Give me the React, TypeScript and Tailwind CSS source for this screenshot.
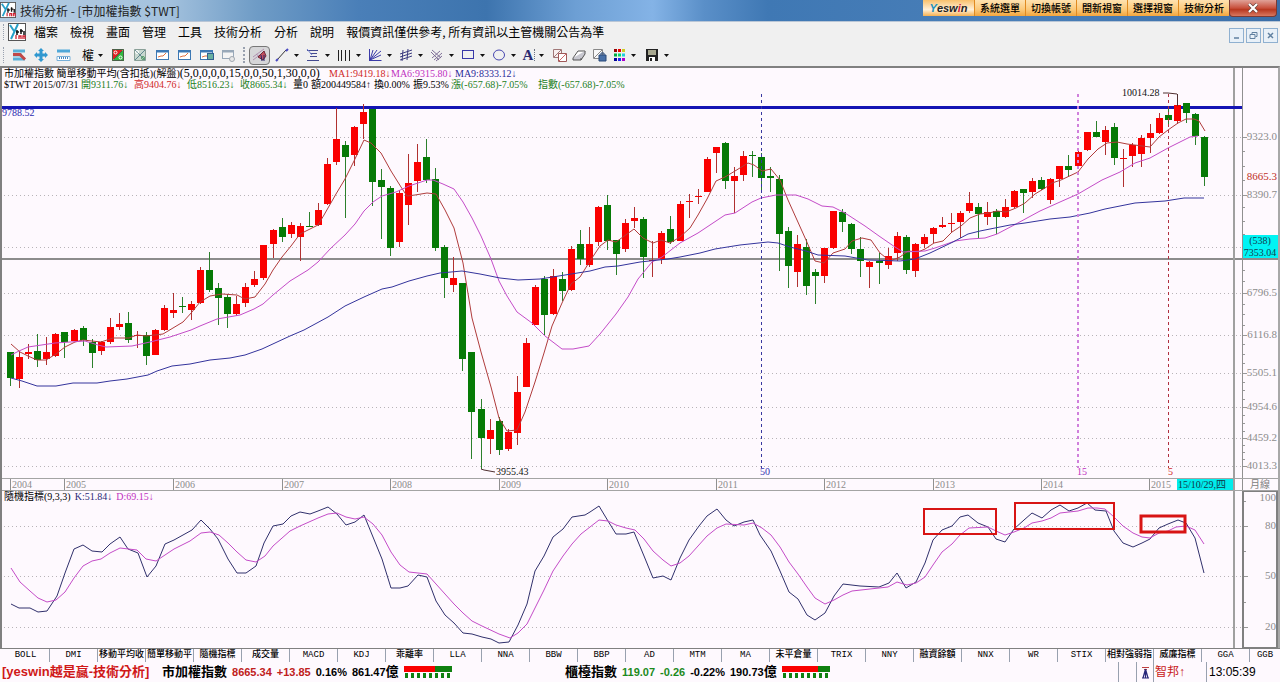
import { Fragment, type ReactNode } from "react";

const MONO = "font-['Liberation_Serif','Noto_Sans_CJK_TC',serif]";

// [bodyTop, bodyBottom, high, low, up]
type Candle = [number, number, number, number, 0 | 1];

const CANDLES: Candle[] = [
  // 2004
  [352, 378, 352, 386, 0], [357, 379, 352, 388, 1], [352, 354, 344, 359, 1], [351, 360, 334, 367, 0],
  [352, 359, 337, 365, 1], [334, 356, 333, 357, 1],
  // 2005
  [332, 342, 332, 358, 0], [330, 341, 329, 341, 1], [328, 340, 326, 346, 0], [342, 353, 339, 368, 0],
  [342, 351, 341, 355, 1], [327, 342, 318, 344, 1], [324, 327, 313, 330, 1], [323, 340, 312, 343, 0],
  [335, 336, 331, 348, 1], [335, 356, 332, 365, 0], [330, 355, 329, 355, 1], [308, 330, 305, 331, 1],
  // 2006
  [310, 313, 293, 318, 1], [306, 307, 297, 313, 0], [304, 310, 301, 320, 1], [270, 303, 267, 304, 1],
  [270, 290, 252, 292, 0], [288, 298, 283, 325, 0], [297, 314, 294, 328, 0], [304, 314, 296, 316, 1],
  [287, 303, 283, 307, 1], [279, 285, 271, 287, 1], [245, 278, 245, 280, 1], [230, 244, 229, 258, 1],
  // 2007
  [227, 237, 218, 242, 0], [225, 234, 222, 238, 1], [226, 237, 223, 261, 1], [226, 227, 212, 227, 0],
  [210, 225, 203, 226, 1], [164, 204, 158, 205, 1], [139, 162, 108, 165, 1], [145, 157, 141, 218, 0],
  [127, 155, 126, 166, 1], [112, 124, 104, 139, 1], [109, 182, 109, 206, 0], [180, 187, 169, 239, 0],
  // 2008
  [188, 248, 186, 256, 0], [193, 242, 190, 247, 1], [183, 205, 154, 225, 1], [162, 181, 144, 192, 1],
  [157, 180, 139, 183, 0], [179, 248, 168, 251, 0], [247, 278, 245, 298, 0], [278, 285, 257, 292, 1],
  [283, 359, 283, 371, 0], [352, 412, 352, 459, 0], [409, 438, 399, 469, 0], [430, 439, 419, 454, 1],
  // 2009
  [421, 450, 417, 455, 0], [432, 449, 429, 451, 1], [392, 433, 376, 445, 1], [343, 387, 338, 387, 1],
  [287, 325, 285, 325, 1], [279, 315, 276, 336, 0], [276, 314, 269, 315, 1], [279, 291, 272, 301, 0],
  [249, 290, 246, 291, 1], [244, 259, 230, 265, 0], [244, 265, 227, 267, 1], [207, 242, 206, 246, 1],
  // 2010
  [205, 241, 195, 250, 0], [240, 254, 240, 275, 0], [223, 249, 219, 252, 1], [218, 221, 207, 228, 1],
  [219, 257, 217, 278, 0], [260, 261, 241, 277, 1], [233, 259, 231, 264, 1], [229, 242, 216, 244, 0],
  [204, 241, 201, 241, 1], [201, 202, 194, 218, 1], [196, 197, 189, 204, 1], [159, 192, 157, 192, 1],
  // 2011
  [147, 153, 147, 173, 1], [143, 181, 142, 189, 0], [176, 181, 167, 213, 1], [156, 175, 151, 181, 1],
  [155, 156, 151, 177, 0], [157, 178, 153, 192, 0], [176, 178, 167, 192, 0], [179, 234, 175, 271, 0],
  [231, 266, 227, 288, 0], [244, 272, 235, 287, 1], [247, 286, 239, 295, 0], [272, 276, 269, 304, 0],
  // 2012
  [248, 276, 248, 283, 1], [211, 248, 211, 249, 1], [212, 222, 209, 232, 0], [224, 249, 223, 254, 0],
  [249, 261, 237, 277, 0], [262, 267, 261, 288, 1], [261, 263, 253, 284, 0], [256, 265, 248, 269, 1],
  [236, 253, 232, 261, 1], [237, 270, 235, 274, 0], [244, 271, 243, 277, 1], [237, 244, 234, 248, 1],
  // 2013
  [228, 234, 227, 243, 1], [225, 227, 217, 228, 1], [223, 224, 213, 232, 1], [213, 222, 211, 238, 1],
  [203, 211, 192, 213, 1], [207, 214, 203, 238, 0], [212, 217, 202, 225, 1], [211, 217, 209, 234, 0],
  [207, 217, 199, 218, 1], [191, 207, 190, 208, 1], [189, 193, 189, 213, 0], [181, 192, 178, 198, 1],
  // 2014
  [180, 189, 177, 190, 0], [179, 200, 178, 204, 1], [166, 179, 166, 187, 1], [166, 170, 155, 177, 0],
  [152, 166, 148, 166, 1], [132, 150, 132, 151, 1], [132, 137, 121, 137, 0], [130, 142, 126, 155, 1],
  [127, 158, 123, 165, 0], [158, 159, 149, 187, 1], [145, 156, 143, 167, 1], [138, 154, 135, 167, 1],
  // 2015
  [133, 138, 124, 153, 1], [118, 133, 113, 134, 1], [115, 120, 108, 127, 0], [105, 121, 94, 124, 1],
  [103, 113, 103, 123, 0], [114, 136, 113, 145, 0], [137, 177, 136, 186, 0],
];

const MA5 =
  "11,344 20,352 28,356 37,360 46,360 56,354 65,347 75,342 83,340 101,342 113,338 129,338 137,335 146,336 163,334 183,322 192,312 200,302 210,296 222,294 237,295 245,299 255,297 265,284 273,270 282,257 291,246 300,234 318,225 324,215 336,194 345,179 354,161 364,140 371,143 381,153 391,171 401,187 407,196 415,195 427,193 436,194 445,210 454,228 463,263 472,318 481,352 491,387 499,418 507,431 517,430 525,412 535,382 544,353 552,326 562,303 571,284 580,277 590,261 600,246 608,240 616,242 634,229 643,238 653,243 661,240 670,243 680,237 690,228 698,215 707,199 716,181 725,177 735,171 748,163 754,165 762,171 771,169 780,180 788,200 797,220 806,240 815,261 824,263 833,253 845,249 852,241 862,238 871,240 880,253 890,261 900,257 908,251 918,252 925,249 934,243 943,241 952,232 961,226 970,218 980,214 989,213 997,211 1006,212 1016,208 1025,203 1035,194 1045,188 1052,183 1061,180 1078,172 1088,159 1098,149 1107,143 1117,142 1127,144 1150,147 1159,137 1168,130 1178,123 1186,119 1194,119 1199,121 1205,131";
const MA15 =
  "11,355 19,351 28,347 55,343 85,341 98,345 106,347 132,346 150,342 170,337 191,330 200,326 217,319 240,315 254,309 263,304 273,295 290,281 308,270 318,262 331,248 345,235 355,224 364,211 373,202 382,196 396,192 409,186 427,180 433,180 443,184 454,189 463,202 472,218 481,236 491,259 499,281 507,296 517,312 532,323 545,336 562,349 573,349 589,346 600,334 616,314 628,297 638,279 652,262 662,257 680,243 698,233 716,221 725,215 735,213 752,202 761,198 776,195 796,195 808,199 822,206 833,207 845,213 865,226 879,236 895,247 903,252 925,251 935,248 955,241 970,239 985,238 997,234 1016,224 1040,211 1060,202 1078,194 1102,180 1120,172 1135,163 1150,158 1168,148 1180,142 1190,137 1198,136";
const MA50 =
  "11,378 22,381 37,386 56,386 73,383 97,383 110,381 127,379 148,375 157,371 172,366 190,364 210,360 230,358 245,355 262,349 290,336 304,330 328,317 345,306 364,297 382,289 392,287 409,281 427,276 440,273 462,271 480,274 500,278 518,280 540,279 565,275 590,271 605,267 618,266 640,262 668,259 680,257 700,253 715,249 740,245 768,242 778,243 790,247 806,251 818,255 845,256 868,260 900,261 915,259 930,253 953,242 968,234 980,231 1010,225 1025,223 1050,219 1070,217 1090,213 1105,209 1120,206 1135,203 1165,201 1184,198 1204,198";
const K_LINE =
  "11,604 19,608 30,608 38,612 47,611 57,596 65,573 74,549 83,545 92,551 102,552 110,544 120,537 128,549 138,553 147,577 156,566 165,544 174,540 192,530 201,520 210,529 218,539 228,559 237,573 246,573 256,566 264,543 273,526 283,524 291,516 300,512 310,514 318,511 328,507 337,514 346,525 355,522 364,515 373,537 382,559 391,588 400,588 408,586 418,575 427,577 436,601 445,615 454,623 463,633 472,634 482,637 491,639 499,643 509,642 518,625 527,604 535,571 544,556 553,537 563,529 572,517 585,515 590,512 599,506 608,521 616,534 626,534 634,532 644,556 653,578 663,576 671,580 680,558 689,540 699,526 707,516 717,509 726,520 734,526 744,522 753,520 760,535 771,551 780,571 789,592 798,599 807,615 815,620 825,613 834,596 843,584 860,586 879,587 889,583 897,573 906,588 916,582 925,563 933,540 942,530 952,526 960,517 968,515 978,523 988,527 996,539 1005,542 1014,529 1024,520 1032,513 1042,518 1051,510 1060,505 1069,511 1078,508 1087,503 1095,510 1106,511 1114,531 1123,543 1133,547 1142,543 1150,539 1159,528 1168,524 1178,520 1186,523 1195,538 1204,573";
const D_LINE =
  "11,568 20,582 30,591 38,598 47,602 56,600 65,592 74,578 83,566 92,561 101,559 110,553 120,548 137,550 146,559 156,561 165,555 174,549 190,541 201,533 210,532 219,535 228,543 237,552 246,560 256,562 265,556 273,546 290,531 300,526 318,518 328,514 337,513 346,517 355,519 364,517 373,524 382,535 391,552 400,565 409,572 427,574 436,584 445,594 454,604 463,613 472,621 482,626 499,634 510,638 518,633 527,624 535,608 544,590 553,571 563,556 572,544 581,534 599,520 608,521 616,525 626,528 635,530 644,539 653,551 663,560 671,566 680,563 689,556 698,546 707,536 717,528 726,524 744,525 753,523 762,528 771,535 780,547 789,562 798,574 807,587 815,598 825,604 834,600 843,595 852,591 861,590 888,587 897,582 907,585 916,583 925,577 933,565 942,552 952,544 960,535 969,528 988,527 996,531 1005,535 1014,532 1024,528 1032,523 1042,521 1051,518 1060,513 1078,511 1088,508 1097,508 1105,509 1114,517 1123,526 1133,533 1142,537 1150,538 1159,533 1168,531 1176,527 1186,526 1195,530 1204,544";

const PRICE_GRID: [number, string][] = [
  [137, "9323.0"], [195, "8390.7"], [247, ""], [293, "6796.5"], [335, "6116.8"],
  [373, "5505.1"], [407, "4954.6"], [438, "4459.2"], [466, "4013.3"],
];
const PRICE_MINOR = [151, 166, 180, 207, 221, 234, 270, 281, 304, 314, 325, 344, 354, 363, 382, 390, 399, 415, 423, 431, 445, 452, 459];
const YEARS: [number, number][] = [
  [10, 2004], [64, 2005], [173, 2006], [282, 2007], [390, 2008], [499, 2009],
  [607, 2010], [716, 2011], [824, 2012], [933, 2013], [1041, 2014], [1149, 2015],
];

const MENUS = ["檔案", "檢視", "畫面", "管理", "工具", "技術分析", "分析", "說明"];
const QUICK = ["系統選單", "切換帳號", "開新視窗", "選擇視窗", "技術分析"];
const TABS = [
  "BOLL", "DMI", "移動平均收", "簡單移動平", "隨機指標", "成交量", "MACD", "KDJ", "乖離率",
  "LLA", "NNA", "BBW", "BBP", "AD", "MTM", "MA", "未平倉量", "TRIX", "NNY",
  "融資餘額", "NNX", "WR", "STIX", "相對強弱指", "威廉指標", "GGA", "GGB",
];

function AppLogo({ className }: { className: string }) {
  return (
    <svg viewBox="0 0 18 18" className={className} aria-hidden="true">
      <rect x=".5" y=".5" width="17" height="17" fill="#fff" stroke="#555" />
      <path d="M2 2l4 6M10 1L3 16" stroke="#28a0c8" strokeWidth="2" fill="none" />
      <path d="M9 7v5M8 9h3M13 6v5M12 8h3M16 8v4" stroke="#111" strokeWidth="1.5" />
      <path d="M8 16v-4M11 16v-3h2v3M15 16v-3h2v3" stroke="#d02030" strokeWidth="1.3" fill="none" />
    </svg>
  );
}

function Icon({ children }: { children: ReactNode }) {
  return (
    <svg viewBox="0 0 16 16" className="h-4 w-4 shrink-0" fill="none" stroke="#3a3a9a" aria-hidden="true">
      {children}
    </svg>
  );
}

function Caret() {
  return (
    <svg viewBox="0 0 5 3" className="h-[3px] w-[5px] shrink-0" aria-hidden="true">
      <path d="M0 0h5L2.5 3z" fill="#111" />
    </svg>
  );
}

function ToolButton({ label, children }: { label: string; children: ReactNode }) {
  return (
    <button aria-label={label} className="flex h-5 w-[22px] shrink-0 items-center justify-center">
      {children}
    </button>
  );
}

function DropButton({ label, children }: { label: string; children: ReactNode }) {
  return (
    <button aria-label={label} className="flex h-5 w-[31px] shrink-0 items-center gap-1 pl-0.5">
      {children}
      <Caret />
    </button>
  );
}

function MiniChart({ extra }: { extra?: ReactNode }) {
  return (
    <Icon>
      <rect x="2.5" y="3.5" width="12" height="9" fill="#fff" stroke="#3c78b4" />
      <path d="M2 4.5h13" stroke="#3c78b4" strokeWidth="2" />
      <path d="M4 10l3-1 2 0 3-3" stroke="#e07040" />
      {extra}
    </Icon>
  );
}

function TitleBar() {
  return (
    <header className="flex h-[22px] items-start border-b border-[#b9c6d6] bg-[linear-gradient(90deg,#b4cbe0_0%,#a4c2de_13%,#6f9cc6_20%,#4a7fb8_28%,#3d74ae_38%,#6d9fd4_45%,#84b3e6_51%,#5a8fc8_55%,#3f78b4_60%,#4a7fb8_80%,#3a6ea8_100%)]">
      <AppLogo className="mt-0.5 h-4 w-4 shrink-0" />
      <h1 className="ml-1 text-[12px] leading-[21px] text-[#222]">技術分析 - [市加權指數 $TWT]</h1>
      <nav className="ml-auto flex h-4 bg-[#f3a53c]">
        <button className="flex w-[51px] items-center justify-center bg-[linear-gradient(#f8c06c,#fff0d8_60%,#f5b050)] font-['Liberation_Sans',sans-serif] text-[11px] leading-4 font-bold italic">
          <span className="text-[#2090c0]">Y</span>
          <span className="text-[#222]">esw</span>
          <span className="text-[#d02040]">i</span>
          <span className="text-[#222]">n</span>
        </button>
        {QUICK.map((label) => (
          <button
            key={label}
            className="w-[51px] border-l border-[#e08a20] bg-[linear-gradient(#ffe2b0,#fbc878_60%,#f3a53c)] text-[10px] leading-4 font-medium whitespace-nowrap text-black"
          >
            {label}
          </button>
        ))}
      </nav>
      <button
        aria-label="關閉"
        className="mr-[3px] flex h-[17px] w-12 items-center justify-center rounded-b-sm border border-t-0 border-[#7a3a34] bg-[linear-gradient(#e0a298,#c8503c_50%,#b83820_60%,#d87860)]"
      >
        <svg viewBox="0 0 12 10" className="h-2.5 w-3">
          <path d="M2 1l8 8M10 1L2 9" stroke="#64403c" strokeWidth="3.4" />
          <path d="M2 1l8 8M10 1L2 9" stroke="#fff" strokeWidth="2.2" />
        </svg>
      </button>
    </header>
  );
}

function MenuBar() {
  const box = "flex h-[15px] w-[15px] items-center justify-center border border-[#8fb0d0] bg-[#e8f0f8]";
  return (
    <div className="flex h-5 items-center pl-[3px]">
      <span className="h-4 border-l border-dotted border-gray-400" />
      <AppLogo className="ml-1 h-[18px] w-[18px] shrink-0" />
      <nav className="ml-2 flex gap-3 text-[12px] leading-5 whitespace-nowrap text-black">
        {MENUS.map((m) => (
          <button key={m}>{m}</button>
        ))}
        <span>報價資訊僅供參考, 所有資訊以主管機關公告為準</span>
      </nav>
      <div className="mt-1.5 mr-0.5 ml-auto flex gap-0.5">
        <button aria-label="最小化" className={box}>
          <svg viewBox="0 0 9 9" className="h-[9px] w-[9px]"><path d="M2 7h5" stroke="#6080a0" strokeWidth="1.5" /></svg>
        </button>
        <button aria-label="還原" className={box}>
          <svg viewBox="0 0 9 9" className="h-[9px] w-[9px]" fill="none" stroke="#6080a0">
            <path d="M3 3V1.500h5v4H6.500M1 3.500h5v4H1z" />
          </svg>
        </button>
        <button aria-label="關閉子視窗" className={box}>
          <svg viewBox="0 0 9 9" className="h-[9px] w-[9px]"><path d="M2 2l5 5M7 2L2 7" stroke="#6080a0" strokeWidth="1.5" /></svg>
        </button>
      </div>
    </div>
  );
}

function Toolbar() {
  return (
    <div className="flex h-6 items-center pt-0.5 pl-[3px]">
      <span className="mr-1 h-4 border-l border-dotted border-gray-400" />
      <ToolButton label="商品">
        <Icon>
          <path d="M2 4h12M2 8h9" stroke="#58b0d8" strokeWidth="3" />
          <path d="M2 12h12" stroke="#58b0d8" strokeWidth="3" />
          <path d="M2 7.500h7l5 5" stroke="#c04848" strokeWidth="3" />
        </Icon>
      </ToolButton>
      <ToolButton label="移動">
        <Icon>
          <path d="M8 3v10M3 8h10" stroke="#3098d0" strokeWidth="3" />
          <path d="M8 1l3 3H5zM8 15l3-3H5zM1 8l3-3v6zM15 8l-3-3v6z" fill="#3098d0" stroke="none" />
        </Icon>
      </ToolButton>
      <ToolButton label="尺標">
        <Icon>
          <path d="M2 4h13" stroke="#50a8d8" strokeWidth="3" />
          <path d="M2 9.500h13v4H2z" fill="#fff" stroke="#78b0d8" />
          <path d="M4.500 10v2M6.500 10v2M8.500 10v2M10.500 10v2M12.500 10v2" stroke="#4888c0" />
        </Icon>
      </ToolButton>
      <button className="flex h-5 w-[33px] shrink-0 items-center gap-1 pl-2 text-[12px] text-black">
        權
        <Caret />
      </button>
      <ToolButton label="百分比">
        <Icon>
          <path d="M2 2h12L2 14z" fill="#e02020" stroke="none" />
          <path d="M14 2v12H2z" fill="#30b840" stroke="none" />
          <path d="M2.500 2.500h11v11h-11zM4 12l8-8" stroke="#486048" />
          <circle cx="5.500" cy="5.500" r="1.500" stroke="#fff" />
          <circle cx="10.500" cy="10.500" r="1.500" stroke="#fff" />
        </Icon>
      </ToolButton>
      <ToolButton label="還原百分比">
        <Icon>
          <path d="M2.500 2.500h11v11h-11z" fill="#c8d8d0" stroke="#8aa098" />
          <path d="M3 13L13 3M3 3l10 10" stroke="#608890" />
          <circle cx="5" cy="5" r="1.500" stroke="#fff" />
          <circle cx="11" cy="11" r="1.500" stroke="#50a060" />
        </Icon>
      </ToolButton>
      <ToolButton label="走勢一"><MiniChart /></ToolButton>
      <ToolButton label="走勢二"><MiniChart /></ToolButton>
      <ToolButton label="走勢三">
        <MiniChart extra={<rect x="9.500" y="6.500" width="6" height="6" fill="#68b0a0" stroke="#306090" />} />
      </ToolButton>
      <ToolButton label="設定">
        <Icon>
          <rect x="2.500" y="3.500" width="11" height="8" fill="#f4f4f4" stroke="#98a8b8" />
          <path d="M2 4.500h12" stroke="#98a8b8" strokeWidth="2" />
          <circle cx="12" cy="12" r="2.500" fill="#e8e8e8" stroke="#a0a8b0" />
        </Icon>
      </ToolButton>
      <span className="mx-1 h-4 border-l-2 border-dotted border-gray-400" />
      <button aria-label="畫線" className="mr-0.5 flex h-[19px] w-[21px] shrink-0 items-center justify-center rounded-sm border border-[#777] bg-[#d6d6d8]">
        <Icon>
          <path d="M1 10L12 2M1 13L13 4M4 7l8 6" stroke="#b090b0" />
          <path d="M6 10l6-6 2 5-3 4z" fill="#c05060" stroke="#702838" />
          <path d="M9 8l1 6M12 8v6" stroke="#28286a" />
        </Icon>
      </button>
      <DropButton label="趨勢線"><Icon><path d="M3 13L12 3" stroke="#333" /><path d="M2 14l2-2M12 4l2-2" stroke="#4848c0" strokeWidth="2" /></Icon></DropButton>
      <DropButton label="黃金分割"><Icon><path d="M2 3.500h11M5 6.500h7M5 9.500h7M2 13.500h12" stroke="#444a90" /><path d="M2 2l5 6" stroke="#7080d0" /></Icon></DropButton>
      <DropButton label="週期線"><Icon><path d="M2.500 3v11M5.500 3v11M9.500 3v11M13.500 3v11" stroke="#222" /></Icon></DropButton>
      <DropButton label="扇形線"><Icon><path d="M2.500 2v12M2.500 13.500h12M3 13L6 3M3 13L10 3M3 13l11-9M3 13l11-5" stroke="#3a3aa8" /></Icon></DropButton>
      <DropButton label="通道線"><Icon><path d="M2 7l12-4M2 10l12-4M2 13l12-4M5 3L4 14M10 2L9 13" stroke="#3c3c80" /></Icon></DropButton>
      <DropButton label="平行線"><Icon><path d="M3 11l8-7M5 13l8-7M7 14l6-5M2 5l8 8M3 3l9 8" stroke="#807098" /></Icon></DropButton>
      <DropButton label="矩形"><Icon><rect x="2.500" y="3.500" width="11" height="8" stroke="#3838a8" /></Icon></DropButton>
      <DropButton label="橢圓"><Icon><ellipse cx="8" cy="8" rx="5.500" ry="5" stroke="#4848b0" /></Icon></DropButton>
      <button aria-label="文字" className="flex h-5 w-[31px] shrink-0 items-center pl-0.5">
        <span className="w-3 font-['Liberation_Serif',serif] text-[15px] leading-none font-bold text-[#2a2a70]">A</span>
        <span className="mr-1 h-3 border-r border-dotted border-gray-500" />
        <Caret />
      </button>
      <div className="flex shrink-0 gap-1 pr-1">
        <button aria-label="複製">
          <Icon><path d="M2.500 2.500h8v8h-8zM3 10l7-7" fill="#f8f0f0" stroke="#a07878" /><path d="M7.500 6.500h8v8h-8z" fill="#fff" stroke="#a05858" /><path d="M8 14l7-7" stroke="#d06868" /></Icon>
        </button>
        <button aria-label="橡皮擦">
          <Icon><path d="M2 11l5-7h7l-4 7z" fill="#fff" stroke="#555" /><path d="M2 11v2h8l4-6V4M10 11v2" fill="#c8c8d0" stroke="#555" /></Icon>
        </button>
        <button aria-label="鎖定">
          <Icon><path d="M2.500 2.500h9v9h-9zM3 11l8-8" fill="#f8f8f8" stroke="#888" /><path d="M8 8h7v6H8z" fill="#4870a8" stroke="#284878" /><path d="M10 8V6h3v2" stroke="#284878" /></Icon>
        </button>
      </div>
      <DropButton label="顏色">
        <svg viewBox="0 0 14 14" className="h-3.5 w-3.5 shrink-0" aria-hidden="true" strokeWidth="3" strokeDasharray="3 1">
          <path d="M1 2.500h4" stroke="#900" /><path d="M5 2.500h4" stroke="#e00" /><path d="M9 2.500h4" stroke="#cc2" />
          <path d="M1 7h4" stroke="#0a4" /><path d="M5 7h4" stroke="#0d6" /><path d="M9 7h4" stroke="#2cd" />
          <path d="M1 11.500h4" stroke="#009" /><path d="M5 11.500h4" stroke="#22e" /><path d="M9 11.500h4" stroke="#a0c" />
        </svg>
      </DropButton>
      <DropButton label="儲存">
        <Icon><path d="M2 2h12v12H2z" fill="#222" stroke="none" /><path d="M4 3h8v5H4z" fill="#a8a890" stroke="none" /><path d="M5 10h6v4H5z" fill="#fff" stroke="none" /><path d="M6 11h2v3H6z" fill="#222" stroke="none" /></Icon>
      </DropButton>
    </div>
  );
}

function ChartInfo() {
  const green = "text-[#228022]";
  return (
    <div className={`flex h-[22px] ${MONO} text-[10px] leading-[11px] whitespace-nowrap text-black`}>
      <div className="flex-1 pl-0.5">
        <div className="flex">
          <span className="w-[325px]">
            市加權指數 簡單移動平均(含扣抵)(解盤)<span className="text-[12px]">(5,0,0,0,0,15,0,0,50,1,30,0,0)</span>
          </span>
          <span className="w-[62px] text-[#d02828]">MA1:9419.18↓</span>
          <span className="w-16 text-[#c030c0]">MA6:9315.80↓</span>
          <span className="text-[#2a2a98]">MA9:8333.12↓</span>
        </div>
        <div className="flex">
          <span className="w-[77px]">$TWT 2015/07/31</span>
          <span className={`w-[53px] ${green}`}>開9311.76↓</span>
          <span className="w-[53px] text-[#d02828]">高9404.76↓</span>
          <span className={`w-[53px] ${green}`}>低8516.23↓</span>
          <span className={`w-[53px] ${green}`}>收8665.34↓</span>
          <span className="w-[18px]">量0</span>
          <span className="w-[63px]">額200449584↑</span>
          <span className="w-[39px]">換0.00%</span>
          <span className="w-[38px]">振9.53%</span>
          <span className={`w-[87px] ${green}`}>漲(-657.68)-7.05%</span>
          <span className={green}>指數(-657.68)-7.05%</span>
        </div>
      </div>
      <div className="w-2.5 border-r border-l-2 border-r-[#909090] border-l-[#a0a0a0]" />
      <div className="w-[35px]" />
    </div>
  );
}

function PriceChart() {
  return (
    <svg viewBox="2 90 1276 401" className={`block h-auto w-full overflow-visible ${MONO} text-[10px]`} role="img" aria-label="市加權指數月線">
      <g stroke="#b8b4b8" strokeDasharray="1 3" shapeRendering="crispEdges">
        {PRICE_GRID.map(([y]) => (
          <path key={y} d={`M4 ${y}.5H1243`} />
        ))}
      </g>
      <g shapeRendering="crispEdges">
        <path d="M2 259H1278" stroke="#8c8c8c" strokeWidth="2" />
        <path d="M1234 90V491" stroke="#a0a0a0" strokeWidth="2" />
        <path d="M1242.500 90V491" stroke="#909090" />
        <path d="M2 107.500H1242" stroke="#1414b4" strokeWidth="3" />
        {CANDLES.map(([top, bottom, high, low, up], i) => {
          const x = Math.floor(10.7 + 9.045 * i);
          return (
            <g key={i} fill={up ? "#fa0000" : "#067a06"}>
              <rect x={x} y={high} width="1" height={low - high} fill={up ? "#b03030" : "#2c802c"} />
              <rect x={x - 3} y={top} width="7" height={bottom - top} />
            </g>
          );
        })}
      </g>
      <g fill="none">
        <polyline points={MA5} stroke="#b03c3c" />
        <polyline points={MA15} stroke="#c44cc8" />
        <polyline points={MA50} stroke="#34349c" />
      </g>
      <g strokeDasharray="3 3" shapeRendering="crispEdges">
        <path d="M761.500 94V468" stroke="#3838a0" />
        <path d="M1078 94V468" stroke="#d080dc" strokeWidth="2" />
        <path d="M1168.500 94V468" stroke="#b03040" />
      </g>
      <path d="M1163 93h5l9 1M1177.500 94v12M481 469l3 1 11 2" stroke="#503030" fill="none" />
      <text x="1122" y="96" fill="#111">10014.28</text>
      <text x="496" y="475" fill="#111">3955.43</text>
      <text x="2" y="116" fill="#2a2ab0">9788.52</text>
      <text x="760" y="475" fill="#3434b0">50</text>
      <text x="1077" y="475" fill="#c030c0">15</text>
      <text x="1168" y="475" fill="#d02828">5</text>

      {/* price scale */}
      <g stroke="#989898" shapeRendering="crispEdges">
        {PRICE_GRID.map(([y]) => (
          <path key={y} d={`M1243 ${y}.5h4`} />
        ))}
        {PRICE_MINOR.map((y) => (
          <path key={y} d={`M1243 ${y}.5h2`} />
        ))}
      </g>
      <g textAnchor="end" fill="#8c8c8c" className="text-[11px]">
        {PRICE_GRID.map(([y, label]) => (
          <text key={y} x="1277" y={y + 3}>{label}</text>
        ))}
        <text x="1277" y="180" fill="#c03028">8665.3</text>
      </g>
      <rect x="1243" y="235" width="35" height="23" fill="#00f4f4" />
      <g textAnchor="middle" fill="#124050" className="text-[10px]">
        <text x="1260" y="244">(538)</text>
        <text x="1260" y="256">7353.04</text>
      </g>

      {/* time scale */}
      <path d="M2 478.500H1278M2 490.500H1278" stroke="#a4a4a4" shapeRendering="crispEdges" />
      {YEARS.map(([x, year]) => (
        <Fragment key={year}>
          <path d={`M${x}.5 479v11`} stroke="#909090" shapeRendering="crispEdges" />
          <text x={x + 2} y="488" fill="#8c8c8c">{year}</text>
        </Fragment>
      ))}
      <rect x="1177" y="479" width="56" height="11" fill="#00ecec" />
      <text x="1178" y="488" fill="#103848">15/10/29,四</text>
      <text x="1260" y="488" textAnchor="middle" fill="#808080">月線</text>
    </svg>
  );
}

function StochasticChart() {
  return (
    <div className="relative">
      <div className={`absolute top-0 left-0.5 flex gap-1 ${MONO} text-[10px] leading-[11px] text-black`}>
        <span>隨機指標(9,3,3)</span>
        <span className="text-[#2a2a78]">K:51.84↓</span>
        <span className="text-[#c030c0]">D:69.15↓</span>
      </div>
      <svg viewBox="2 491 1276 157" className={`block h-auto w-full ${MONO} text-[11px]`} role="img" aria-label="隨機指標">
        <g stroke="#b8b4b8" strokeDasharray="1 3" shapeRendering="crispEdges">
          <path d="M4 526.500H1243M4 576.500H1243M4 627.500H1243" />
        </g>
        <path d="M1234 491V648" stroke="#a0a0a0" strokeWidth="2" shapeRendering="crispEdges" />
        <path d="M1243 648V491H1277V648z" stroke="#808080" strokeWidth="2" fill="none" shapeRendering="crispEdges" />
        <path d="M1244 501.500h2M1244 526.500h4M1244 551.500h2M1244 576.500h4M1244 602.500h2M1244 627.500h4" stroke="#989898" />
        <g fill="none">
          <polyline points={K_LINE} stroke="#30306c" />
          <polyline points={D_LINE} stroke="#c44cc8" />
        </g>
        <g fill="none" stroke="#d81414" strokeWidth="2">
          <rect x="924" y="509" width="72" height="25" />
          <rect x="1015" y="503" width="99" height="26" />
          <rect x="1141" y="516" width="44" height="16" strokeWidth="3" />
        </g>
        <g textAnchor="end" fill="#8c8c8c">
          <text x="1276" y="501">100</text>
          <text x="1276" y="529">80</text>
          <text x="1276" y="579">50</text>
          <text x="1276" y="630">20</text>
        </g>
      </svg>
    </div>
  );
}

function Breadth({ up }: { up: number }) {
  return (
    <svg viewBox="0 0 48 12" className="h-3 w-12 shrink-0" aria-hidden="true" shapeRendering="crispEdges">
      <rect width="48" height="6" fill="#108010" />
      <rect width={up} height="6" fill="#fa0000" />
      {[0, 6, 12, 18, 24, 30, 36, 42].map((x) => (
        <rect key={x} x={x + 1} y="7" width="3" height="5" fill="#108010" />
      ))}
    </svg>
  );
}

function StatusBar() {
  const cjk = "text-[13px]";
  return (
    <footer className="flex h-5 items-center bg-[#fef9fe] font-['Liberation_Sans','Noto_Sans_CJK_TC',sans-serif] text-[11px] leading-5 font-bold whitespace-nowrap text-black">
      <div className="w-[162px] pl-0.5 text-[13px] text-[#d01818]">[yeswin越是贏-技術分析]</div>
      <div className="flex w-[403px] items-center gap-[5px]">
        <span className={cjk}>市加權指數</span>
        <span className="text-[#c02020]">8665.34</span>
        <span className="text-[#c02020]">+13.85</span>
        <span>0.16%</span>
        <span>861.47<span className={cjk}>億</span></span>
        <Breadth up={31} />
      </div>
      <div className="flex items-center gap-[5px]">
        <span className={cjk}>櫃檯指數</span>
        <span className="text-[#1c8a1c]">119.07</span>
        <span className="text-[#1c8a1c]">-0.26</span>
        <span>-0.22%</span>
        <span>190.73<span className={cjk}>億</span></span>
        <Breadth up={36} />
      </div>
      <div className="ml-auto flex h-full items-center font-normal">
        <span className="h-full w-[18px] border-l border-gray-400" />
        <span className="flex h-full w-[17px] items-center justify-center border-l border-gray-400">
          <svg viewBox="0 0 9 13" className="h-[13px] w-[9px]" fill="none" aria-hidden="true">
            <path d="M1 1.500h7M3 3.500h3" stroke="#c04040" />
            <path d="M4.500 3L2 12M4.500 3L7 12M3 8h3M1 12h7M4.500 3v9" stroke="#28287a" strokeWidth="1.200" />
          </svg>
        </span>
        <span className="h-full w-[53px] border-l border-gray-400 pl-px text-[12px] text-[#c82020]">智邦↑</span>
        <time className="w-[74px] border-l border-gray-400 pl-0.5 text-[12px]">13:05:39</time>
      </div>
    </footer>
  );
}

export default function App() {
  return (
    <div className="min-w-0 overflow-hidden bg-[#f0f0f0] font-['Noto_Sans_CJK_TC',sans-serif]">
      <TitleBar />
      <MenuBar />
      <Toolbar />
      <main className="border-x-2 border-t-2 border-t-[#808080] border-r-[#a8a8a8] border-l-[#808080] bg-[#fef9fe]">
        <ChartInfo />
        <PriceChart />
        <StochasticChart />
      </main>
      <nav className="flex h-3.5 overflow-hidden border-t border-[#808080] bg-[#fef9fe] pl-0.5">
        {TABS.map((tab) => (
          <button
            key={tab}
            className="flex w-12 shrink-0 justify-center overflow-hidden border-r border-gray-400 font-['Liberation_Mono','Noto_Sans_CJK_TC',monospace] text-[9px] leading-[13px] font-medium whitespace-nowrap text-black last:w-auto last:flex-1 last:shrink last:border-r-0"
          >
            {tab}
          </button>
        ))}
      </nav>
      <StatusBar />
    </div>
  );
}
